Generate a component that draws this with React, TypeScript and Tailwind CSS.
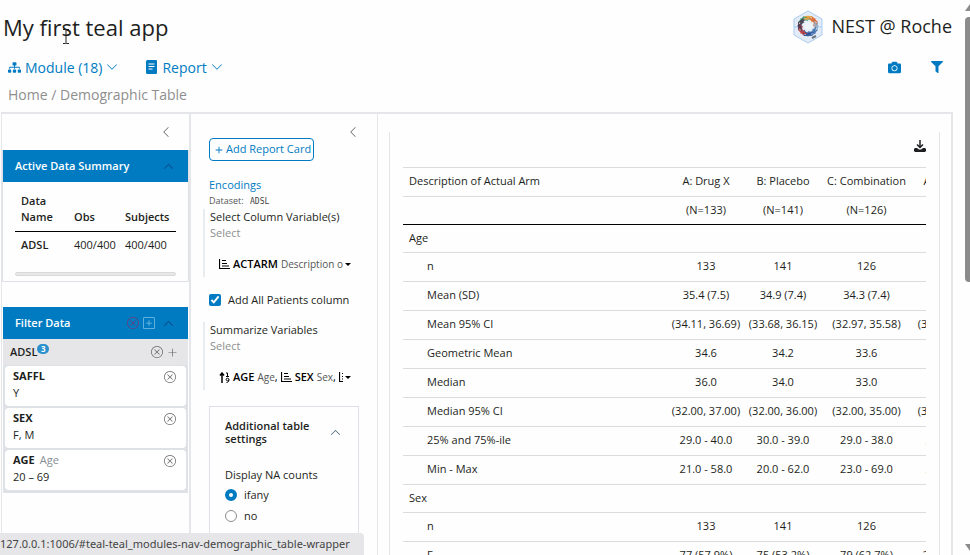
import type { ReactNode } from "react";
import { FaCamera, FaFilter, FaSitemap } from "react-icons/fa";
import {
  BsChevronDown,
  BsChevronLeft,
  BsChevronUp,
  BsPlus,
  BsPlusLg,
  BsPlusSquare,
  BsXCircle,
} from "react-icons/bs";

type Row = { label: string; cells?: string[] };

const ROWS: Row[] = [
  { label: "Age" },
  { label: "n", cells: ["133", "141", "126", "400"] },
  { label: "Mean (SD)", cells: ["35.4 (7.5)", "34.9 (7.4)", "34.3 (7.4)", "34.9 (7.4)"] },
  { label: "Mean 95% CI", cells: ["(34.11, 36.69)", "(33.68, 36.15)", "(32.97, 35.58)", "(34.15, 35.61)"] },
  { label: "Geometric Mean", cells: ["34.6", "34.2", "33.6", "34.1"] },
  { label: "Median", cells: ["36.0", "34.0", "33.0", "34.0"] },
  { label: "Median 95% CI", cells: ["(32.00, 37.00)", "(32.00, 36.00)", "(32.00, 35.00)", "(33.00, 35.00)"] },
  { label: "25% and 75%-ile", cells: ["29.0 - 40.0", "30.0 - 39.0", "29.0 - 38.0", "29.0 - 39.0"] },
  { label: "Min - Max", cells: ["21.0 - 58.0", "20.0 - 62.0", "23.0 - 69.0", "20.0 - 69.0"] },
  { label: "Sex" },
  { label: "n", cells: ["133", "141", "126", "400"] },
  { label: "F", cells: ["77 (57.9%)", "75 (53.2%)", "79 (62.7%)", "231 (57.8%)"] },
];

const FILTERS = [
  { name: "SAFFL", hint: "", value: "Y" },
  { name: "SEX", hint: "", value: "F, M" },
  { name: "AGE", hint: "Age", value: "20 – 69" },
];

function NestLogo() {
  const arms = ["#2f8f6b", "#e8a13a", "#d9663a", "#8fb4cf", "#3f6fae", "#2d4f96", "#c23b3b", "#4a3b52"];
  return (
    <svg width="30" height="34" viewBox="0 0 30 34" aria-hidden="true">
      <path d="M15 1 29 9v16l-14 8L1 25V9z" fill="#e3ebf6" stroke="#a9cdf0" />
      <path d="M1 17h7M22 17h7" stroke="#a9cdf0" />
      {arms.map((color, i) => (
        <g key={color} transform={`rotate(${i * 45 - 30} 15 16)`} stroke={color} fill="none" strokeWidth="1.1">
          <path d="M9 8l7-2 5 4M11 10l6-2 3 3M9 11l5-4M12 6l6 5" />
        </g>
      ))}
      <circle cx="15" cy="16" r="4" fill="#eef3fa" />
      <path d="M19 28l4-2" stroke="#6d7580" strokeWidth="2" />
    </svg>
  );
}

function ReportIcon() {
  return (
    <svg width="12" height="14" viewBox="0 0 12 14" aria-hidden="true">
      <path d="M1.500 0H10a1 1 0 0 1 1 1v12a1 1 0 0 1-1 1H1.500a1.500 1.500 0 0 1-1.500-1.500v-11A1.500 1.500 0 0 1 1.500 0z" fill="currentColor" />
      <path d="M2.500 4h6M2.500 6.500h6M2.500 9h4" stroke="#fff" />
    </svg>
  );
}

function BarsIcon() {
  return (
    <svg width="11" height="10" viewBox="0 0 11 10" className="shrink-0" aria-hidden="true">
      <path d="M.5 0v9.500h10.500M3 1.500h4M3 4.500h5M3 7h7" fill="none" stroke="currentColor" strokeWidth="1.200" />
    </svg>
  );
}

function NumericIcon() {
  return (
    <svg width="11" height="11" viewBox="0 0 11 11" className="shrink-0" aria-hidden="true">
      <path d="M3 11V1M1 3.500 3 1l2 2.500" fill="none" stroke="currentColor" strokeWidth="1.500" />
      <path d="M7 1h1.500v3.500M7 4.500h3" fill="none" stroke="currentColor" />
      <circle cx="8.500" cy="7.500" r="1.300" fill="none" stroke="currentColor" />
      <path d="M10 7.500c0 2-1 3-2.500 3" fill="none" stroke="currentColor" />
    </svg>
  );
}

function DownloadIcon() {
  return (
    <svg width="12" height="12" viewBox="0 0 12 12" aria-hidden="true">
      <path d="M6 0v7M3 4.500l3 3 3-3" fill="none" stroke="currentColor" strokeWidth="1.500" />
      <path d="M1 8h2l2 1.500h2L9 8h2l1 1v2l-1 1H1l-1-1V9z" fill="currentColor" />
    </svg>
  );
}

function Caret() {
  return <span className="ml-[2px] shrink-0 border-x-3 border-t-3 border-x-transparent border-t-black" />;
}

function TopBar() {
  return (
    <header>
      <div className="flex h-[53px] items-center justify-between pl-[3px]">
        <h1 className="text-[22px] leading-[30px] text-[#1d1f21]">My first teal app</h1>
        <div className="flex items-center gap-2 pr-px text-[18px] text-[#1d1f21]">
          <NestLogo />
          <span>NEST @ Roche</span>
        </div>
      </div>
      <nav className="flex h-7 items-center justify-between pr-[10px] pl-2 text-[14px] text-[#007bc2]">
        <div className="flex gap-7">
          <button className="flex items-center gap-1">
            <FaSitemap size={13} />
            Module (18)
            <BsChevronDown size={12} />
          </button>
          <button className="flex items-center gap-1">
            <ReportIcon />
            Report
            <BsChevronDown size={12} />
          </button>
        </div>
        <div className="flex items-center gap-[30px]">
          <button aria-label="Snapshots">
            <FaCamera size={13} />
          </button>
          <button aria-label="Filters">
            <FaFilter size={12} />
          </button>
        </div>
      </nav>
      <p className="h-[31px] pl-2 text-[14px] leading-7 text-[#8e8e8e]">Home / Demographic Table</p>
    </header>
  );
}

function SectionHeader({ title, children }: { title: string; children?: ReactNode }) {
  return (
    <div className="flex h-8 items-center justify-between bg-[#007bc2] pr-[10px] pl-3 text-[11px] font-semibold text-white">
      <h2>{title}</h2>
      <div className="flex items-center gap-1 text-[#0a3f78]">
        {children}
        <button aria-label={`Collapse ${title}`} className="px-1">
          <BsChevronUp size={11} />
        </button>
      </div>
    </div>
  );
}

function DataSidebar() {
  return (
    <aside className="w-[190px] shrink-0 border-r-2 border-l border-[#e4e6e9]">
      <div className="flex h-9 items-center justify-end pr-[17px]">
        <button aria-label="Collapse data panel" className="text-[#666]">
          <BsChevronLeft size={12} />
        </button>
      </div>

      <section className="border border-t-0 border-[#dee2e6]">
        <SectionHeader title="Active Data Summary" />
        <div className="px-3 pt-[5px] pb-[5px]">
          <table className="w-full table-fixed text-left text-[11px] leading-4 text-[#1d1f21]">
            <colgroup>
              <col className="w-[51px]" />
              <col className="w-[51px]" />
              <col />
            </colgroup>
            <thead>
              <tr className="border-b border-black align-bottom">
                <th className="py-[6px] pl-[6px] font-semibold">Data Name</th>
                <th className="py-[6px] pl-2 font-semibold">Obs</th>
                <th className="py-[6px] pl-2 font-semibold">Subjects</th>
              </tr>
            </thead>
            <tbody>
              <tr>
                <th className="py-[5px] pl-[6px] font-semibold">ADSL</th>
                <td className="py-[5px] pl-2">400/400</td>
                <td className="py-[5px] pl-2">400/400</td>
              </tr>
            </tbody>
          </table>
          <div className="mt-[14px] h-1 rounded-sm border border-[#d9d9d9] bg-[#e8e8e8]" />
        </div>
      </section>

      <section className="mt-[25px] px-px">
        <SectionHeader title="Filter Data">
          <button aria-label="Remove all filters" className="text-[#6b3a78]">
            <BsXCircle size={12} />
          </button>
          <button aria-label="Add filter" className="text-[#7fc1e8]">
            <BsPlusSquare size={12} />
          </button>
        </SectionHeader>
        <div className="flex h-[26px] items-center justify-between bg-[#e6e6e9] pr-[10px] pl-[7px]">
          <h3 className="flex items-start text-[11px] leading-4 font-semibold text-[#1d1f21]">
            ADSL
            <span className="h-[10px] w-3 rounded-full bg-[#2b90cc] text-center text-[8px] leading-[10px] font-bold text-white">
              3
            </span>
          </h3>
          <div className="flex items-center gap-1 text-[#666]">
            <button aria-label="Remove ADSL filters">
              <BsXCircle size={12} />
            </button>
            <button aria-label="Add ADSL filter">
              <BsPlusLg size={11} />
            </button>
          </div>
        </div>
        <ul className="flex flex-col gap-[2px] border-x-2 border-t border-b-3 border-[#dee2e6] bg-[#dee2e6]">
          {FILTERS.map((f) => (
            <li key={f.name} className="flex h-10 justify-between rounded-sm bg-white pt-[1px] pr-[10px] pl-2 text-[11px]">
              <div className="leading-[17px] text-[#1d1f21]">
                <p>
                  <span className="font-bold">{f.name}</span>
                  {f.hint && <span className="ml-[5px] text-[#868e96]">{f.hint}</span>}
                </p>
                <p>{f.value}</p>
              </div>
              <button aria-label={`Remove ${f.name}`} className="h-5 self-start text-[#666]">
                <BsXCircle size={12} />
              </button>
            </li>
          ))}
        </ul>
      </section>
    </aside>
  );
}

function PickerGroup({ title, children }: { title: string; children: ReactNode }) {
  return (
    <div className="-ml-[6px] h-[68px] border-l-2 border-[#e9ecef] pl-[5px] text-[11px] leading-4">
      <p className="text-[#1d1f21]">{title}</p>
      <p className="text-[#8e8e8e]">Select</p>
      <button
        aria-haspopup="listbox"
        aria-label={title}
        className="mt-[13px] ml-[9px] flex h-5 w-[132px] items-center text-[#000]"
      >
        <span className="flex min-w-0 flex-1 items-center gap-[3px] overflow-hidden whitespace-nowrap">{children}</span>
        <Caret />
      </button>
    </div>
  );
}

function EncodingSidebar() {
  return (
    <aside className="w-[187px] shrink-0 overflow-hidden border-r border-[#e4e6e9] pr-[18px] pl-[18px]">
      <div className="flex h-6 items-end justify-end">
        <button aria-label="Collapse encodings" className="text-[#666]">
          <BsChevronLeft size={12} />
        </button>
      </div>
      <button className="flex h-[23px] items-center rounded-sm border border-[#007bc2] px-[2px] text-[11px] text-[#007bc2]">
        <BsPlus size={14} />
        Add Report Card
      </button>
      <p className="mt-4 text-[11px] leading-4 text-[#007bc2]">Encodings</p>
      <p className="mt-px text-[9px] leading-[14px] text-[#555]">
        Dataset: <code className="ml-1 font-['DejaVu_Sans_Mono',monospace] text-[8px] text-[#444]">ADSL</code>
      </p>
      <PickerGroup title="Select Column Variable(s)">
        <BarsIcon />
        <span className="font-semibold">ACTARM</span>
        <span className="text-[10px] text-[#555]">Description of Planned Arm</span>
      </PickerGroup>
      <label className="mt-[15px] mb-[14px] flex h-4 items-center gap-[7px] text-[11px] whitespace-nowrap text-[#1d1f21]">
        <input type="checkbox" defaultChecked className="m-0 h-3 w-3 accent-[#007bc2]" />
        Add All Patients column
      </label>
      <PickerGroup title="Summarize Variables">
        <NumericIcon />
        <span className="font-semibold">AGE</span>
        <span>
          <span className="text-[10px] text-[#555]">Age</span>,
        </span>
        <BarsIcon />
        <span className="font-semibold">SEX</span>
        <span>
          <span className="text-[10px] text-[#555]">Sex</span>,
        </span>
        <BarsIcon />
      </PickerGroup>
      <section className="mt-4 h-44 border border-[#dee2e6] px-[15px]">
        <button className="flex h-[50px] w-full items-center justify-between text-left text-[11px] leading-[13px] font-semibold text-[#1d1f21]">
          <span className="w-[96px]">Additional table settings</span>
          <BsChevronUp size={11} className="mr-[2px] text-[#3b5b6e]" />
        </button>
        <fieldset className="text-[11px] text-[#1d1f21]">
          <legend className="pt-[10px] leading-4">Display NA counts</legend>
          {["ifany", "no"].map((v) => (
            <label key={v} className="flex h-[21px] items-center gap-[7px] pt-[3px]">
              <input
                type="radio"
                name="na"
                defaultChecked={v === "ifany"}
                className="m-0 h-3 w-3 appearance-none rounded-full border border-[#8a8d91] bg-white checked:border-4 checked:border-[#007bc2]"
              />
              {v}
            </label>
          ))}
        </fieldset>
      </section>
    </aside>
  );
}

function Output() {
  return (
    <main className="min-w-0 flex-1 overflow-hidden border-r-2 border-[#e4e6e9] px-[11px]">
      <div className="mt-[18px] h-full border-x border-[#e4e6e9] px-[13px]">
        <div className="flex h-[35px] items-center justify-end pb-2">
          <button aria-label="Download table" className="text-[#1d1f21]">
            <DownloadIcon />
          </button>
        </div>
        <div className="overflow-hidden">
          <table className="w-[589px] table-fixed text-center text-[11px] leading-4 text-[#1d1f21] [&_td]:pb-[2px] [&_th]:pb-[2px]">
            <colgroup>
              <col />
              <col className="w-[78px]" />
              <col className="w-[76px]" />
              <col className="w-[91px]" />
              <col className="w-[80px]" />
            </colgroup>
            <thead>
              <tr className="h-[29px] border-y border-[#dcdcdc]">
                <th className="pl-[6px] text-left font-medium">Description of Actual Arm</th>
                <th className="font-medium">A: Drug X</th>
                <th className="font-medium">B: Placebo</th>
                <th className="font-medium">C: Combination</th>
                <th className="font-medium">All Patients</th>
              </tr>
              <tr className="h-[28px] border-b border-black">
                <th />
                <th className="font-medium">(N=133)</th>
                <th className="font-medium">(N=141)</th>
                <th className="font-medium">(N=126)</th>
                <th className="font-medium">(N=400)</th>
              </tr>
            </thead>
            <tbody>
              {ROWS.map((r, i) =>
                r.cells ? (
                  <tr key={i} className="h-[29px] border-b border-[#dcdcdc]">
                    <td className="pl-6 text-left">{r.label}</td>
                    {r.cells.map((c, j) => (
                      <td key={j} className="whitespace-nowrap">
                        {c}
                      </td>
                    ))}
                  </tr>
                ) : (
                  <tr key={i} className="h-[28px] border-b border-[#dcdcdc]">
                    <td colSpan={5} className="pl-[6px] text-left">
                      {r.label}
                    </td>
                  </tr>
                ),
              )}
            </tbody>
          </table>
        </div>
      </div>
    </main>
  );
}

export default function App() {
  return (
    <div className="relative flex h-screen overflow-hidden bg-[#fefefe] font-['Open_Sans',sans-serif]">
      <div className="flex min-w-0 flex-1 flex-col">
        <TopBar />
        <div className="ml-px flex min-h-0 flex-1 border-t-2 border-[#e4e6e9]">
          <DataSidebar />
          <EncodingSidebar />
          <Output />
        </div>
      </div>

      <div className="flex w-[17px] flex-col items-end justify-between overflow-hidden" aria-hidden="true">
        <svg width="5" height="11" viewBox="0 0 5 11">
          <path d="M5 4v7H0z" fill="#8b8b8b" />
        </svg>
        <div className="mt-[6px] mb-auto h-[265px] w-[5px] rounded-l-sm bg-[#8b8b8b]" />
        <svg width="5" height="11" viewBox="0 0 5 11">
          <path d="M0 0h5v7z" fill="#8b8b8b" />
        </svg>
      </div>

      <div className="absolute bottom-0 left-0 flex h-[22px] w-[364px] items-center overflow-hidden rounded-tr-sm bg-[#e6e6e9] pt-px font-['Noto_Sans',sans-serif] text-[11px] whitespace-nowrap text-[#444]">
        <span>127.0.0.1:1006/#teal-teal_modules-nav-demographic_table-wrapper</span>
      </div>

      <svg className="absolute top-[29px] left-[62px]" width="8" height="15" viewBox="0 0 8 15" aria-hidden="true">
        <path d="M1 .5h2.500l.5.5.5-.5H7M4 1v13M1 14.500h2.500L4 14l.5.5H7" fill="none" stroke="#222" />
      </svg>
    </div>
  );
}
